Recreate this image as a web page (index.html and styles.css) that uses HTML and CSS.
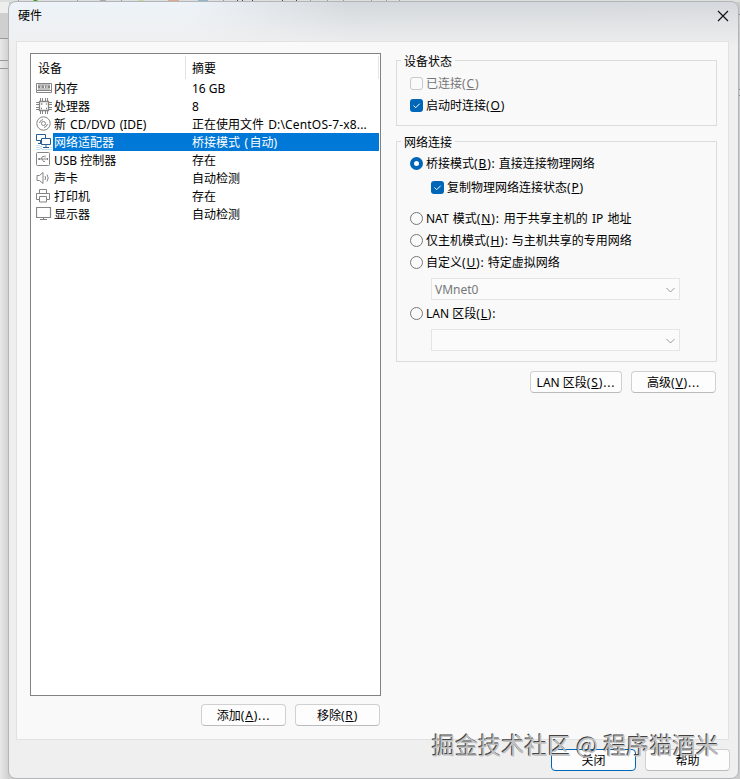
FILE: index.html
```html
<!DOCTYPE html>
<html lang="zh-CN">
<head>
<meta charset="utf-8">
<title>硬件</title>
<link rel="stylesheet" href="styles.css">
</head>
<body>
<div class="backdrop" aria-hidden="true">
<svg width="740" height="779" viewBox="0 0 740 779"><path d="M0 0h740v2H0z" fill="#dcdfde"/><path d="M0 2h9v11H0z" fill="#eee"/><path d="M0 13h9v25H0z" fill="#cfcfcf"/><path d="M0 38.500h9M0 60.500h9M0 68.500h9" stroke="#999"/><path d="M737 14.500h3M737 89.500h3M737 95.500h3" stroke="#888"/><path d="M32 2l2-2h4l-3 2z" fill="#3f9b20"/><path d="M100 0h6v2h-6z" fill="#aaa"/><path d="M138 0h6v2h-6z" fill="#c5dba8"/><path d="M168 0h11v2h-11z" fill="#e3a68e"/><path d="M198 0h10v2h-10z" fill="#8fb6cc"/><path d="M18.500 0v2M77.500 0v2M121.500 0v2M223.500 0v2M310.500 0v2M327.500 0v2M343.500 0v2M371.500 0v2M386.500 0v2M399.500 0v2" stroke="#999"/><path d="M237.500 0v2M242.500 0v2M252.500 0v2M267.500 1.500h15V0M296.500 0v2" stroke="#444" fill="none"/></svg>
</div>
<main class="dialog">
  <header class="titlebar">
    <span>硬件</span>
    <svg class="close" width="12" height="12" viewBox="0 0 12 12"><path d="M1 1l10 10M11 1L1 11" stroke="#111" stroke-width="1.2"/></svg>
  </header>
  <section class="panel">
    <div class="left">
      <div class="list">
        <div class="head"><span class="c1">设备</span><span class="c2">摘要</span></div>
        <div class="row"><svg viewBox="0 0 17 17"><path d="M.5 3.500h15v7H.5zM.5 10.500v2h15v-2M2 5h12M2 9h12"/><path d="M2 6.800h2.500m1 0H8m1 0h1.500m1 0H14" stroke-width="2.600"/></svg><span class="c1">内存</span><span class="c2">16 GB</span></div>
        <div class="row"><svg viewBox="0 0 17 17"><path d="M3.500 3.500h9v9h-9z" stroke-width="1.300"/><path d="M4.500 0v3m2-3v3m3-3v3m2-3v3M4.500 13v3m2-3v3m3-3v3m2-3v3M0 4.500h3m-3 2h3m-3 3h3m-3 2h3M13 4.500h3m-3 2h3m-3 3h3m-3 2h3"/><path d="M5 6h1.500M10 6h1M5 10.500h1M10 10.500h1" stroke-width="1.500"/></svg><span class="c1">处理器</span><span class="c2">8</span></div>
        <div class="row"><svg viewBox="0 0 17 17"><circle cx="7.500" cy="7.500" r="6.700"/><circle cx="7.500" cy="7.500" r="2"/><path d="M3.500 7A4.500 4.500 0 0 1 7 3.500M11.500 8A4.500 4.500 0 0 1 8 11.500"/></svg><span class="c1 sp">新 CD/DVD (IDE)</span><span class="c2 sp">正在使用文件 <span class="path">D:\CentOS-7-x8...</span></span></div>
        <div class="row selected"><svg viewBox="0 0 17 17"><g stroke="#285f93" fill="#fff"><path d="M.5 .5h9v6h-9zM2 9.500h4M4.500 6.500v3"/><path d="M5.500 4.500h9v6h-9zM7 13.500h6M10 10.500v3"/></g><path d="M1 11v5M3 11v5M5 12v4M7 15v1M9 15v1M11 15v1M13 15v1M15 13v3" stroke="#8dbbe4" stroke-dasharray="1 1"/></svg><span class="c1">网络适配器</span><span class="c2">桥接模式<b> (</b>自动<b>)</b></span></div>
        <div class="row"><svg viewBox="0 0 17 17"><rect x=".5" y=".5" width="13" height="13" rx="1"/><path d="M2 7h9M5 7l1.500-2.500H8M6 7l1.500 2.500H9"/><path d="M2.500 7H4m5.500-2.500h-1M11 7h1" stroke-width="2"/></svg><span class="c1">USB 控制器</span><span class="c2">存在</span></div>
        <div class="row"><svg viewBox="0 0 17 17"><path d="M1 5.500h2.500l3.500-3v11l-3.500-3H1zM9 6q1.200 2 0 4M11 4.500q2.400 3.500 0 7"/></svg><span class="c1">声卡</span><span class="c2">自动检测</span></div>
        <div class="row"><svg viewBox="0 0 17 17"><path d="M3.500 5.500v-4h7v4M3.500 11.500H.5v-6h13v6h-3M3.500 8.500h7v5.500h-7z"/></svg><span class="c1">打印机</span><span class="c2">存在</span></div>
        <div class="row"><svg viewBox="0 0 17 17"><path d="M.5 1.500h14v10H.5zM7.500 11.500v2M4 13.500h7" stroke-width="1.200"/></svg><span class="c1">显示器</span><span class="c2">自动检测</span></div>
      </div>
      <div class="buttons"><button>添加<span class="key">(<u>A</u>)...</span></button><button>移除<span class="key">(<u>R</u>)</span></button></div>
    </div>
    <div class="right">
      <div class="group status">
        <div class="legend">设备状态</div>
        <div class="opt disabled"><i class="box"></i><span>已连接<span class="key">(<u>C</u>)</span></span></div>
        <div class="opt"><i class="box on"><svg viewBox="0 0 13 13"><path d="M3.500 6.500l2.200 2.200 4-4"/></svg></i><span>启动时连接<span class="key">(<u>O</u>)</span></span></div>
      </div>
      <div class="group network">
        <div class="legend">网络连接</div>
        <div class="opt"><i class="radio on"></i><span>桥接模式<span class="key">(<u>B</u>):</span> 直接连接物理网络</span></div>
        <div class="opt sub"><i class="box on"><svg viewBox="0 0 13 13"><path d="M3.500 6.500l2.200 2.200 4-4"/></svg></i><span>复制物理网络连接状态<span class="key">(<u>P</u>)</span></span></div>
        <div class="opt nat"><i class="radio"></i><span class="sp">NAT 模式<span class="key">(<u>N</u>):</span> 用于共享主机的 IP 地址</span></div>
        <div class="opt"><i class="radio"></i><span>仅主机模式<span class="key">(<u>H</u>):</span> 与主机共享的专用网络</span></div>
        <div class="opt"><i class="radio"></i><span>自定义<span class="key">(<u>U</u>):</span> 特定虚拟网络</span></div>
        <div class="select"><span>VMnet0</span><svg width="9" height="6" viewBox="0 0 9 6"><path d="M.5 1l4 4 4-4"/></svg></div>
        <div class="opt lan"><i class="radio"></i><span>LAN 区段<span class="key">(<u>L</u>):</span></span></div>
        <div class="select"><span></span><svg width="9" height="6" viewBox="0 0 9 6"><path d="M.5 1l4 4 4-4"/></svg></div>
      </div>
      <div class="buttons"><button class="wide">LAN 区段<span class="key">(<u>S</u>)...</span></button><button>高级<span class="key">(<u>V</u>)...</span></button></div>
    </div>
  </section>
  <footer class="footer"><button class="default">关闭</button><button>帮助</button></footer>
</main>
<div class="watermark">掘金技术社区 @ 程序猫酒米</div>
</body>
</html>
```
FILE: styles.css
```css
* { box-sizing: border-box; }
body {
  margin: 0;
  width: 740px;
  height: 779px;
  overflow: hidden;
  position: relative;
  background: linear-gradient(90deg, #e8e8e8, #cfcfcf 9px, #ccc);
  font: 12px/18px "Noto Sans", "Noto Sans CJK SC", sans-serif;
  color: #000;
}
.backdrop { position: absolute; inset: 0; }
.backdrop svg { display: block; }
.dialog {
  position: relative;
  margin: 1px 1px 0 8px;
  height: 778px;
  border: 1px solid #b3b6b7;
  border-radius: 8px;
  background: linear-gradient(180deg, transparent, #efefef 45px), linear-gradient(90deg, #edf3f9 180px, #d3d8dc 340px, #d5d8dc);
  padding: 0 9px 0 7px;
}
.titlebar { height: 39px; display: flex; justify-content: space-between; padding: 5px 0 0 2px; }
.close { margin: 3px 0 0; }
.panel {
  height: 699px;
  border: 1px solid #e2e2e2;
  background: #f9f9f9;
  display: flex;
  gap: 15px;
  padding: 11px 11px 0 13px;
}
.left { width: 351px; flex: none; }
.list { height: 643px; border: 1px solid #828282; background: #fff; }
.head { height: 25px; display: flex; padding: 6px 0 0 7px; }
.head .c1 { width: 147px; }
.head .c2 { padding-left: 6px; border-left: 1px solid #e2e2e2; margin-top: -4px; padding-top: 4px; }
.head::after { content: ""; margin: -4px 1px 0 auto; border-left: 1px solid #e5e5e5; }
.row { height: 18px; display: flex; padding-left: 5px; white-space: pre; }
.row svg { width: 17px; height: 17px; margin-top: 1px; flex: none; fill: none; stroke: #858585; }
.row .c1 { width: 132px; padding: 1px 0 0 1px; }
.row .c2 { flex: 1; padding: 1px 0 0 7px; margin-right: 1px; }
.row b { font-weight: 400; letter-spacing: 1.4px; }
.sp { word-spacing: 1px; }
.path { letter-spacing: .17px; }
.selected .c1, .selected .c2 { background: #0078d7; color: #fff; }
.buttons { display: flex; justify-content: flex-end; gap: 9px; margin-top: 8px; }
.left .buttons { padding-right: 1px; }
button {
  width: 85px;
  height: 22px;
  padding: 2px 0 0;
  border: 1px solid #d0d0d0;
  border-bottom-color: #bbb;
  border-radius: 4px;
  background: #fdfdfd;
  font: inherit;
  line-height: 18px;
  color: #000;
}
u { text-underline-offset: 1px; text-decoration-thickness: 1px; }
.right { width: 321px; flex: none; padding-top: 7px; }
.group { position: relative; border: 1px solid #dcdcdc; padding: 12px 0 0 13px; }
.legend { position: absolute; top: -8px; left: 4px; padding: 0 3px; line-height: 17px; background: #f9f9f9; }
.status { height: 66px; }
.network { height: 221px; margin-top: 15px; padding-top: 11px; }
.opt { height: 22px; display: flex; align-items: center; white-space: pre; }
.opt > span { padding-left: 3px; }
.key { letter-spacing: .85px; }
.disabled { color: #777; }
.box, .radio { width: 13px; height: 13px; margin-bottom: 2px; flex: none; border: 1px solid #777; border-radius: 3px; background: #fafafa; }
.disabled .box { border-color: #c8c8c8; }
.radio { border-radius: 50%; }
.box.on { background: #0067b8; border: 0; }
.box svg { display: block; fill: none; stroke: #fff; }
.radio.on { border: 4px solid #0067b8; background: #fff; }
.sub { margin: 2px 0 0 21px; }
.nat { margin-top: 9px; }
.select { width: 249px; height: 22px; margin: 4px 0 0 21px; border: 1px solid #e5e5e5; background: #fbfbfb; display: flex; align-items: center; justify-content: space-between; padding: 1px 4px 0 3px; color: #777; }
.select svg { fill: none; stroke: #999; }
.lan { margin: 3px 0 0; }
.right .buttons { padding-right: 1px; margin-top: 9px; }
.wide { width: 92px; }
.footer { display: flex; justify-content: flex-end; gap: 9px; padding-top: 9px; margin-right: -1px; }
.default { border: 1px solid #0067b8; }
.watermark {
  position: absolute;
  left: 432px;
  top: 727px;
  font: 23px/34px "Noto Sans CJK SC", sans-serif;
  letter-spacing: .15px;
  white-space: pre;
  color: #c0c0c0;
  text-shadow: -1px -1px 0 #444;
}
```
